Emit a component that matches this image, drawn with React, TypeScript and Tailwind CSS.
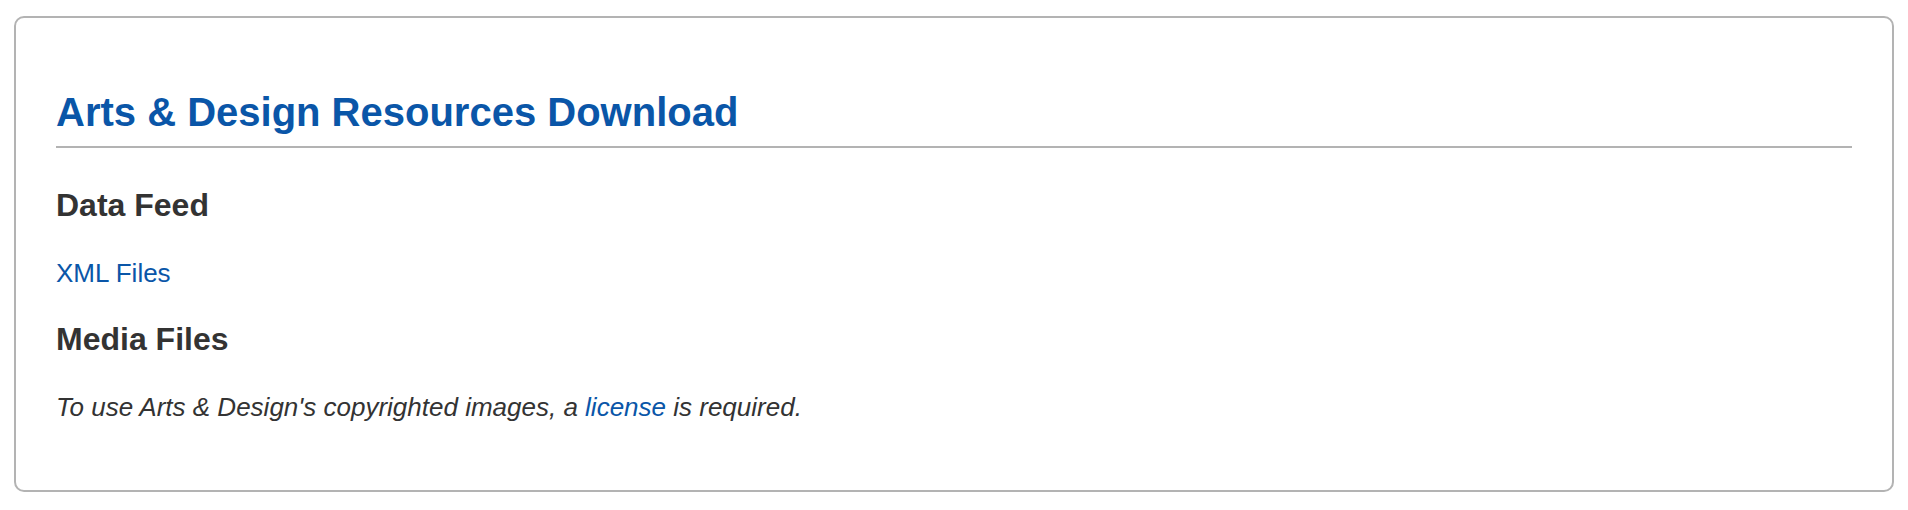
export default function App() {
  return (
    <main className="px-3.5 pt-4 pb-4 bg-white font-['Liberation_Sans',Arial,sans-serif] text-[#333333]">
      <section className="rounded-[10px] border-2 border-[#b3b3b3] px-10 pt-[70px] pb-[63px]">
        <h1 className="border-b-2 border-[#b3b3b3] pb-2.5 text-[40px] leading-[48px] font-bold text-[#0a56a8]">
          Arts &amp; Design Resources Download
        </h1>
        <h2 className="mt-[37px] text-[32px] leading-10 font-bold">Data Feed</h2>
        <p className="mt-7 text-[26px] leading-10">
          <a href="#xml" className="text-[#0a56a8]">XML Files</a>
        </p>
        <h2 className="mt-[26px] text-[32px] leading-10 font-bold">Media Files</h2>
        <p className="mt-7 text-[26px] leading-10 italic">
          To use Arts &amp; Design's copyrighted images, a{" "}
          <a href="#license" className="text-[#0a56a8]">license</a> is required.
        </p>
      </section>
    </main>
  );
}
